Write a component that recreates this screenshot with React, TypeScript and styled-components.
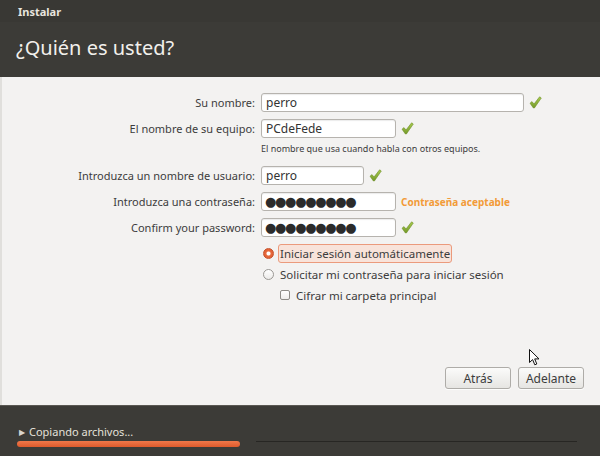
import React from 'react'
import styled, { createGlobalStyle } from 'styled-components'

const GlobalStyle = createGlobalStyle`
  html, body { margin: 0; padding: 0; }
  body { font-family: "Noto Sans", "Open Sans", sans-serif; }
`

const Window = styled.div`
  position: relative;
  width: 600px;
  height: 456px;
  display: flex;
  flex-direction: column;
  overflow: hidden;
  background: #3c3b37;
`

const TitleBar = styled.div`
  height: 22px;
  display: flex;
  align-items: center;
  padding-left: 18px;
  background: #393834;
  color: #e8e5df;
  font-size: 11px;
  font-weight: 700;
`

const Header = styled.div`
  height: 55px;
  display: flex;
  align-items: center;
  padding-left: 16px;
  padding-bottom: 4px;
  box-sizing: border-box;
  color: #f2f0ec;
  font-size: 20px;
`

const Content = styled.div`
  flex: 1;
  display: flex;
  flex-direction: column;
  padding: 16px 16px 16px 0;
  background: #f3f2f1;
  border-left: 2px solid #e0dfdc;
`

const Form = styled.div`
  display: grid;
  grid-template-columns: 253px 1fr;
  column-gap: 6px;
  row-gap: 7px;
  align-items: center;
`

const Label = styled.div`
  text-align: right;
  font-size: 11px;
  color: #3c3c3c;
`

const Field = styled.div`
  display: flex;
  align-items: center;
  gap: 5px;
  height: 19px;
`

const Input = styled.div<{ $w: number; $dots?: boolean }>`
  width: ${p => p.$w}px;
  height: 19px;
  box-sizing: border-box;
  display: flex;
  align-items: center;
  padding-left: ${p => (p.$dots ? '3px' : '4px')};
  background: #fff;
  border: 1px solid #b6b3ae;
  border-radius: 3px;
  box-shadow: inset 0 1px 1px rgba(0, 0, 0, 0.08);
  font-family: ${p => (p.$dots ? '"DejaVu Sans", sans-serif' : 'inherit')};
  font-size: ${p => (p.$dots ? '13px' : '12px')};
  letter-spacing: ${p => (p.$dots ? '-1.3px' : '0')};
  color: ${p => (p.$dots ? '#2b2b2b' : '#333')};
  overflow: hidden;
`

const Hint = styled.div`
  grid-column: 2;
  font-size: 9px;
  color: #3c3c3c;
  margin-top: -3px;
  margin-bottom: 4px;
`

const Strength = styled.span`
  font-size: 10px;
  font-weight: 700;
  color: #f29b38;
`

const Options = styled.div`
  display: flex;
  flex-direction: column;
  gap: 1px;
  margin-top: 6px;
  padding-left: 261px;
`

const OptionRow = styled.div<{ $indent?: boolean }>`
  display: flex;
  align-items: center;
  gap: 4px;
  height: 20px;
  padding-left: ${p => (p.$indent ? '17px' : '0')};
  font-size: 11.5px;
  color: #3c3c3c;
`

const Radio = styled.span<{ $on?: boolean }>`
  width: 11px;
  height: 11px;
  box-sizing: border-box;
  border-radius: 50%;
  border: 1px solid ${p => (p.$on ? '#c7532d' : '#9a9894')};
  background: ${p =>
    p.$on
      ? 'radial-gradient(circle, #fff 0 1.5px, #e86a3d 2.5px, #d9582e 100%)'
      : 'linear-gradient(#fff, #ecebe9)'};
  flex: none;
`

const Check = styled.span`
  width: 10px;
  height: 10px;
  box-sizing: border-box;
  border: 1px solid #8e8c88;
  border-radius: 2px;
  background: linear-gradient(#fff, #eeedeb);
  flex: none;
`

const OptionText = styled.span<{ $focus?: boolean }>`
  padding: 1px 1px;
  border: 1px solid ${p => (p.$focus ? '#eb9a7c' : 'transparent')};
  border-radius: 3px;
  background: ${p => (p.$focus ? '#f8e3da' : 'transparent')};
`

const Buttons = styled.div`
  margin-top: auto;
  display: flex;
  justify-content: flex-end;
  gap: 7px;
`

const Button = styled.div`
  width: 66px;
  height: 22px;
  box-sizing: border-box;
  display: flex;
  align-items: center;
  justify-content: center;
  border: 1px solid #aeaca8;
  border-radius: 3px;
  background: linear-gradient(#fbfbfa, #e6e5e2);
  box-shadow: 0 1px 0 rgba(255, 255, 255, 0.8);
  font-size: 12px;
  color: #3c3c3c;
`

const Footer = styled.div`
  height: 51px;
  box-sizing: border-box;
  padding: 18px 23px 0 17px;
  display: flex;
  flex-direction: column;
  gap: 2px;
  border-top: 1px solid #5a5853;
`

const Status = styled.div`
  display: flex;
  align-items: center;
  gap: 4px;
  padding-left: 2px;
  font-size: 11px;
  color: #e4e1da;
`

const Arrow = styled.span`
  font-size: 8px;
  color: #d8d5ce;
`

const Progress = styled.div`
  display: flex;
  align-items: flex-start;
  gap: 16px;
`

const Fill = styled.div`
  width: 223px;
  height: 6px;
  border-radius: 3px;
  background: linear-gradient(#f0784a, #de5a2c);
`

const Track = styled.div`
  flex: 1;
  height: 1px;
  background: #272623;
`

const Cursor = styled.svg`
  position: absolute;
  left: 529px;
  top: 349px;
`

const Tick = () => (
  <svg width="13" height="13" viewBox="0 0 13 13">
    <defs>
      <linearGradient id="tg" x1="0" y1="0" x2="0" y2="1">
        <stop offset="0" stopColor="#a9cc4e" />
        <stop offset="1" stopColor="#74992a" />
      </linearGradient>
    </defs>
    <path
      d="M1 7.2 L3 5.6 L5 8 L10.6 0.8 L12.3 2 L5.4 12 L4.4 12 Z"
      fill="url(#tg)"
      stroke="#6d8f26"
      strokeWidth="0.6"
      strokeLinejoin="round"
    />
  </svg>
)

const dots = '●●●●●●●●●'

export default function App() {
  return (
    <>
      <GlobalStyle />
      <Window>
        <TitleBar>Instalar</TitleBar>
        <Header>¿Quién es usted?</Header>
        <Content>
          <Form>
            <Label>Su nombre:</Label>
            <Field>
              <Input $w={263}>perro</Input>
              <Tick />
            </Field>
            <Label>El nombre de su equipo:</Label>
            <Field>
              <Input $w={135}>PCdeFede</Input>
              <Tick />
            </Field>
            <Hint>El nombre que usa cuando habla con otros equipos.</Hint>
            <Label>Introduzca un nombre de usuario:</Label>
            <Field>
              <Input $w={103}>perro</Input>
              <Tick />
            </Field>
            <Label>Introduzca una contraseña:</Label>
            <Field>
              <Input $w={135} $dots>{dots}</Input>
              <Strength>Contraseña aceptable</Strength>
            </Field>
            <Label>Confirm your password:</Label>
            <Field>
              <Input $w={135} $dots>{dots}</Input>
              <Tick />
            </Field>
          </Form>
          <Options>
            <OptionRow>
              <Radio $on />
              <OptionText $focus>Iniciar sesión automáticamente</OptionText>
            </OptionRow>
            <OptionRow>
              <Radio />
              <OptionText>Solicitar mi contraseña para iniciar sesión</OptionText>
            </OptionRow>
            <OptionRow $indent>
              <Check />
              <OptionText>Cifrar mi carpeta principal</OptionText>
            </OptionRow>
          </Options>
          <Buttons>
            <Button>Atrás</Button>
            <Button>Adelante</Button>
          </Buttons>
        </Content>
        <Footer>
          <Status>
            <Arrow>▶</Arrow>
            Copiando archivos...
          </Status>
          <Progress>
            <Fill />
            <Track />
          </Progress>
        </Footer>
        <Cursor width="11" height="17" viewBox="0 0 11 17">
          <path d="M0.5 0.5 L0.5 13.5 L3.6 10.6 L5.8 15.8 L7.8 15 L5.7 9.9 L10 9.9 Z" fill="#fff" stroke="#111" strokeWidth="1" strokeLinejoin="round" />
        </Cursor>
      </Window>
    </>
  )
}
